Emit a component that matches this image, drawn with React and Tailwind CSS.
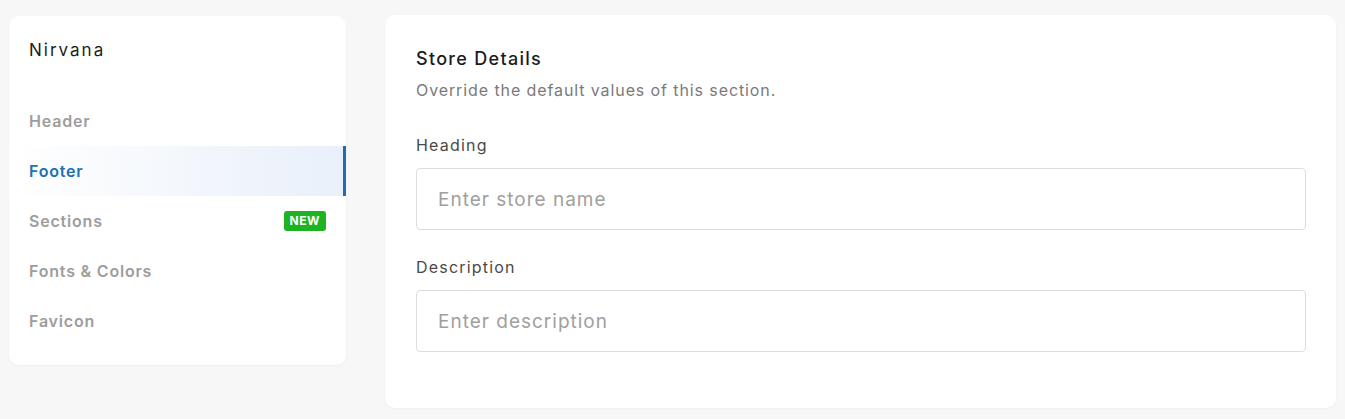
export default function App() {
  const items = ["Header", "Footer", "Sections", "Fonts & Colors", "Favicon"];
  return (
    <div className="w-[1345px] h-[419px] bg-[#f7f7f7] flex items-start gap-[39px] pl-[9px] pt-[15px]" style={{ fontFamily: '"Inter", "Noto Sans", sans-serif' }}>
      <div className="w-[337px] h-[349px] mt-[1px] bg-white rounded-[10px] shadow-[0_1px_3px_rgba(0,0,0,0.04)] flex flex-col">
        <div className="pl-[20px] pt-[24px] h-[80px] text-[17px] tracking-[2px] text-[#1c1c1c] leading-[20px]">Nirvana</div>
        {items.map((it) => {
          const active = it === "Footer";
          return (
            <div
              key={it}
              className={
                "h-[50px] flex items-center justify-between pl-[20px] pr-[20px] text-[16px] tracking-[0.8px] font-semibold " +
                (active
                  ? "bg-gradient-to-r from-white to-[#e9f0fa] border-r-[3px] border-[#1f6cb0] text-[#2070b4]"
                  : "text-[#9d9d9d]")
              }
            >
              <span>{it}</span>
              {it === "Sections" && (
                <span className="h-[20px] flex items-center bg-[#1db322] text-white text-[12px] tracking-[0.5px] font-bold leading-none rounded-[3px] px-[6px]">NEW</span>
              )}
            </div>
          );
        })}
      </div>
      <div className="w-[951px] h-[393px] bg-white rounded-[10px] shadow-[0_1px_3px_rgba(0,0,0,0.04)] pl-[31px] pr-[30px] pt-[32px]">
        <div className="text-[18px] tracking-[1.3px] font-medium text-[#1c1c1c] leading-[24px]">Store Details</div>
        <div className="mt-[9px] text-[16px] tracking-[0.9px] text-[#7a7a7a] leading-[20px]">Override the default values of this section.</div>
        <div className="mt-[35px] text-[16px] tracking-[1.2px] text-[#4a4a4a] leading-[20px]">Heading</div>
        <input
          className="mt-[13px] w-full h-[62px] border border-[#dcdcdc] rounded-[4px] px-[21px] text-[19px] tracking-[1px] placeholder:text-[#a0a0a0] outline-none"
          placeholder="Enter store name"
        />
        <div className="mt-[27px] text-[16px] tracking-[1.2px] text-[#4a4a4a] leading-[20px]">Description</div>
        <input
          className="mt-[13px] w-full h-[62px] border border-[#dcdcdc] rounded-[4px] px-[21px] text-[19px] tracking-[1px] placeholder:text-[#a0a0a0] outline-none"
          placeholder="Enter description"
        />
      </div>
    </div>
  );
}
